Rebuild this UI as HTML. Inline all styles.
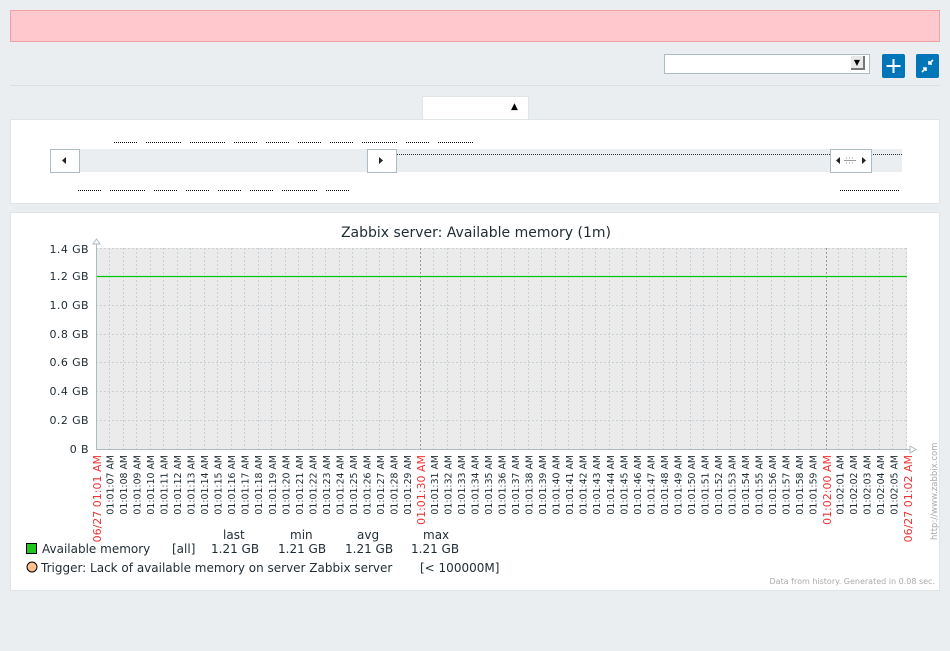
<!DOCTYPE html><html><head><style>
body{margin:0;width:950px;height:651px;background:#ebeef0;font-family:"DejaVu Sans","Liberation Sans",sans-serif;position:relative;overflow:hidden}
.a{position:absolute}
</style></head><body>
<div class="a" style="left:10px;top:10px;width:928px;height:30px;background:#ffc8cc;border:1px solid #f0a1a6"></div>
<div class="a" style="left:664px;top:54px;width:204px;height:18px;background:#fff;border:1px solid #acbbc4"></div>
<div class="a" style="left:851px;top:56px;width:14px;height:14px;background:#e8e8e8;border-right:2px solid #777;border-bottom:2px solid #777;box-sizing:border-box;font-size:8px;text-align:center;line-height:13px">▼</div>
<div class="a" style="left:882px;top:54px;width:23px;height:24px;background:#0275b8;border-radius:2px"><svg width="23" height="24"><path d="M11.5 5v14M4.5 12h14" stroke="#fff" stroke-width="2"/></svg></div>
<div class="a" style="left:916px;top:54px;width:23px;height:24px;background:#0275b8;border-radius:2px"><svg width="23" height="24"><path d="M17 6l-4 4M13 7v3h3M6 18l4-4M7 14h3v3" stroke="#fff" stroke-width="1.6" fill="none"/></svg></div>
<div class="a" style="left:10px;top:85px;width:930px;height:1px;background:#d9dfe3"></div>
<div class="a" style="left:422px;top:96px;width:105px;height:24px;background:#fff;border:1px solid #dfe4e7;border-bottom:none"><span class="a" style="left:88px;top:5px;font-size:9px">▲</span></div>
<div class="a" style="left:10px;top:119px;width:928px;height:83px;background:#fff;border:1px solid #dfe4e7"></div>
<svg class="a" style="left:0;top:0" width="950" height="210">
<g stroke="#000" stroke-dasharray="1 1" stroke-width="1">
<path d="M114 142.5h24M146 142.5h36M190 142.5h36M234 142.5h24M266 142.5h24M298 142.5h24M330 142.5h24M362 142.5h36M406 142.5h24M438 142.5h36M78 190.5h24M110 190.5h36M154 190.5h24M186 190.5h24M218 190.5h24M250 190.5h24M282 190.5h36M326 190.5h24M840 190.5h60"/>
</g>
<rect x="50" y="149" width="852" height="23" fill="#ebeef0"/>
<path d="M397 154.5h505" stroke="#333" stroke-dasharray="1 1"/>
<rect x="50.5" y="149.5" width="29" height="23" fill="#fff" stroke="#acbbc4"/><path d="M66 157v7l-4-3.5z" fill="#222"/>
<rect x="367.5" y="149.5" width="29" height="23" fill="#fff" stroke="#acbbc4"/><path d="M379 157v7l4-3.5z" fill="#222"/>
<rect x="830.5" y="149.5" width="41" height="23" fill="#fff" stroke="#acbbc4"/><path d="M840 157v7l-4-3.5zM862 157v7l4-3.5z" fill="#222"/><path d="M846 158h1M849 158h1M852 158h1M846 163h1M849 163h1M852 163h1M844 160.5h12" stroke="#999"/>
</svg>
<div class="a" style="left:10px;top:212px;width:928px;height:377px;background:#fff;border:1px solid #dfe4e7"></div>
<svg class="a" style="left:0;top:0" width="950" height="651" font-family="DejaVu Sans, sans-serif">
<text x="476" y="237" font-size="14" text-anchor="middle" fill="#1f2c33">Zabbix server: Available memory (1m)</text>
<rect x="96" y="248" width="811" height="201" fill="#ebebeb"/>
<g stroke="#c9d0d4" stroke-dasharray="2 2">
<path d="M96 248.5h811M96 305.5h811M96 334.5h811M96 362.5h811M96 391.5h811M96 420.5h811"/>
<path d="M109.5 248v201M123.5 248v201M136.5 248v201M150.5 248v201M163.5 248v201M177.5 248v201M190.5 248v201M204.5 248v201M217.5 248v201M231.5 248v201M244.5 248v201M258.5 248v201M271.5 248v201M285.5 248v201M298.5 248v201M312.5 248v201M325.5 248v201M339.5 248v201M352.5 248v201M366.5 248v201M379.5 248v201M393.5 248v201M406.5 248v201M433.5 248v201M447.5 248v201M460.5 248v201M474.5 248v201M487.5 248v201M501.5 248v201M514.5 248v201M528.5 248v201M541.5 248v201M555.5 248v201M568.5 248v201M582.5 248v201M595.5 248v201M609.5 248v201M622.5 248v201M636.5 248v201M649.5 248v201M663.5 248v201M676.5 248v201M690.5 248v201M703.5 248v201M717.5 248v201M730.5 248v201M744.5 248v201M757.5 248v201M771.5 248v201M784.5 248v201M798.5 248v201M811.5 248v201M838.5 248v201M852.5 248v201M865.5 248v201M879.5 248v201M892.5 248v201M906.5 248v201"/>
</g>
<path d="M420.5 248v201M826.5 248v201" stroke="#999" stroke-dasharray="2 2"/>
<path d="M96 276.5h811" stroke="#00c800" stroke-width="1.3"/>
<path d="M96.5 242v207.5H912" stroke="#acbbc4" fill="none"/>
<path d="M93 244l3.5-5 3.5 5zM910 446l6 3.5-6 3.5z" fill="#fff" stroke="#acbbc4"/>
<g font-size="11" fill="#1f2c33" text-anchor="end" letter-spacing="0.4">
<text x="89" y="253">1.4 GB</text><text x="89" y="280">1.2 GB</text><text x="89" y="309">1.0 GB</text><text x="89" y="338">0.8 GB</text><text x="89" y="366">0.6 GB</text><text x="89" y="395">0.4 GB</text><text x="89" y="424">0.2 GB</text><text x="89" y="453">0 B</text>
</g>
<g transform="translate(96,455) rotate(-90)" font-size="9.4" text-anchor="end" fill="#1f2c33">
<text x="0" y="5" fill="#e33" font-size="11">06/27 01:01 AM</text>
<text y="17.5">01:01:07 AM</text><text y="31">01:01:08 AM</text><text y="44.6">01:01:09 AM</text><text y="58.1">01:01:10 AM</text><text y="71.6">01:01:11 AM</text><text y="85.1">01:01:12 AM</text><text y="98.6">01:01:13 AM</text><text y="112.2">01:01:14 AM</text><text y="125.7">01:01:15 AM</text><text y="139.2">01:01:16 AM</text><text y="152.7">01:01:17 AM</text><text y="166.2">01:01:18 AM</text><text y="179.8">01:01:19 AM</text><text y="193.3">01:01:20 AM</text><text y="206.8">01:01:21 AM</text><text y="220.3">01:01:22 AM</text><text y="233.8">01:01:23 AM</text><text y="247.4">01:01:24 AM</text><text y="260.9">01:01:25 AM</text><text y="274.4">01:01:26 AM</text><text y="287.9">01:01:27 AM</text><text y="301.4">01:01:28 AM</text><text y="315">01:01:29 AM</text>
<text y="329" fill="#e33" font-size="11">01:01:30 AM</text>
<text y="342">01:01:31 AM</text><text y="355.5">01:01:32 AM</text><text y="369">01:01:33 AM</text><text y="382.6">01:01:34 AM</text><text y="396.1">01:01:35 AM</text><text y="409.6">01:01:36 AM</text><text y="423.1">01:01:37 AM</text><text y="436.6">01:01:38 AM</text><text y="450.2">01:01:39 AM</text><text y="463.7">01:01:40 AM</text><text y="477.2">01:01:41 AM</text><text y="490.7">01:01:42 AM</text><text y="504.2">01:01:43 AM</text><text y="517.8">01:01:44 AM</text><text y="531.3">01:01:45 AM</text><text y="544.8">01:01:46 AM</text><text y="558.3">01:01:47 AM</text><text y="571.8">01:01:48 AM</text><text y="585.4">01:01:49 AM</text><text y="598.9">01:01:50 AM</text><text y="612.4">01:01:51 AM</text><text y="625.9">01:01:52 AM</text><text y="639.4">01:01:53 AM</text><text y="653">01:01:54 AM</text><text y="666.5">01:01:55 AM</text><text y="680">01:01:56 AM</text><text y="693.5">01:01:57 AM</text><text y="707">01:01:58 AM</text><text y="720.6">01:01:59 AM</text>
<text y="735" fill="#e33" font-size="11">01:02:00 AM</text>
<text y="747.6">01:02:01 AM</text><text y="761.1">01:02:02 AM</text><text y="774.6">01:02:03 AM</text><text y="788.2">01:02:04 AM</text><text y="801.7">01:02:05 AM</text>
<text y="816" fill="#e33" font-size="11">06/27 01:02 AM</text>
</g>
<text transform="translate(937,540) rotate(-90)" font-size="8.5" fill="#aaa">http://www.zabbix.com</text>
<g font-size="12" fill="#1f2c33">
<text x="223" y="539">last</text><text x="290" y="539">min</text><text x="357" y="539">avg</text><text x="423" y="539">max</text>
<rect x="26.5" y="543.5" width="10" height="10" fill="#1ec81e" stroke="#000"/>
<text x="42" y="553">Available memory</text><text x="172" y="553">[all]</text><text x="211" y="553">1.21 GB</text><text x="278" y="553">1.21 GB</text><text x="345" y="553">1.21 GB</text><text x="411" y="553">1.21 GB</text>
<circle cx="32" cy="567" r="5" fill="#ffc08c" stroke="#000"/>
<text x="41" y="572">Trigger: Lack of available memory on server Zabbix server</text><text x="420" y="572">[&lt; 100000M]</text>
</g>
<text x="935" y="584" font-size="8" fill="#aaa" text-anchor="end">Data from history. Generated in 0.08 sec.</text>
</svg>
</body></html>
